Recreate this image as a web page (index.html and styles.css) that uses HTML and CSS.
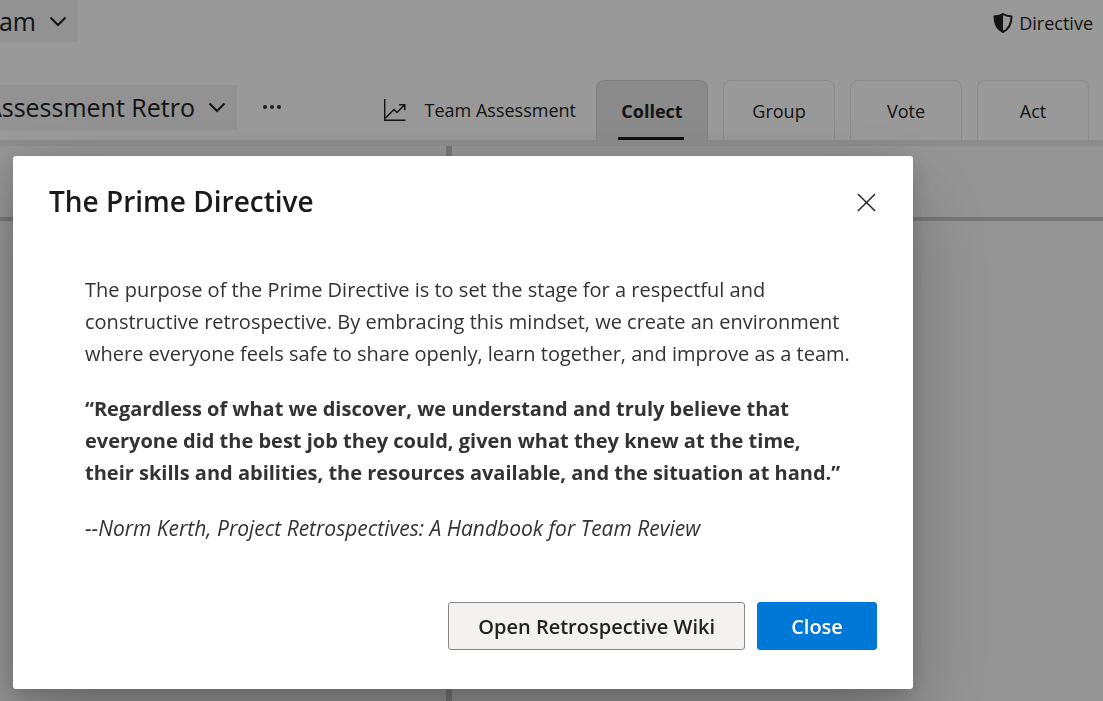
FILE: index.html
```
<!DOCTYPE html>
<html lang="en">
<head>
<meta charset="utf-8">
<meta name="viewport" content="width=device-width, initial-scale=1">
<title>Retrospectives</title>
<link rel="stylesheet" href="styles.css">
</head>
<body>
<div class="app">
  <header class="topbar">
    <button class="selector team-selector" type="button">
      <span>am</span>
      <svg class="chevron" viewBox="0 0 18 12" aria-hidden="true"><path d="M1.500 2.500 9 10 16.500 2.500"/></svg>
    </button>
    <button class="directive-button" type="button">
      <svg class="shield" viewBox="0 0 20 22" aria-hidden="true">
        <path class="shield-outline" d="M10 2C7.500 3.700 4.600 4.200 1.500 4.500c0 8 2.500 12.500 8.500 15.500 6-3 8.500-7.500 8.500-15.500C15.400 4.200 12.500 3.700 10 2z"/>
        <path class="shield-half" d="M10 2C7.500 3.700 4.600 4.200 1.500 4.500c0 8 2.500 12.500 8.500 15.500z"/>
      </svg>
      <span>Directive</span>
    </button>
  </header>
  <div class="board-bar">
    <button class="selector board-selector" type="button">
      <span>Assessment Retro</span>
      <svg class="chevron" viewBox="0 0 18 12" aria-hidden="true"><path d="M1.500 2.500 9 10 16.500 2.500"/></svg>
    </button>
    <button class="more-button" type="button" aria-label="More actions">
      <svg class="dots" viewBox="0 0 18 4" aria-hidden="true"><circle cx="2" cy="2" r="2"/><circle cx="9" cy="2" r="2"/><circle cx="16" cy="2" r="2"/></svg>
    </button>
    <button class="assessment-button" type="button">
      <svg class="chart" viewBox="0 0 22 22" aria-hidden="true"><path d="M.7 0v21.200H21.500M1.500 19 10 10.500l3 3L20.500 6M15 5.700h5.800v5.600"/></svg>
      <span>Team Assessment</span>
    </button>
    <nav class="tabs">
      <button class="tab tab-active" type="button">Collect</button>
      <button class="tab" type="button">Group</button>
      <button class="tab" type="button">Vote</button>
      <button class="tab" type="button">Act</button>
    </nav>
  </div>
  <main class="board">
    <section class="column"><div class="column-head"></div></section>
    <section class="column column-wide"><div class="column-head"></div></section>
  </main>
</div>

<div class="overlay">
  <div class="dialog" role="dialog" aria-modal="true" aria-labelledby="dialog-title">
    <div class="dialog-head">
      <h1 class="dialog-title" id="dialog-title">The Prime Directive</h1>
      <button class="dismiss" type="button" aria-label="Dismiss">
        <svg class="cross" viewBox="0 0 20 20" aria-hidden="true"><path d="M1 1 19 19M19 1 1 19"/></svg>
      </button>
    </div>
    <div class="dialog-body">
      <p class="text">The purpose of the Prime Directive is to set the stage for a respectful and<br>constructive retrospective. By embracing this mindset, we create an environment<br>where everyone feels safe to share openly, learn together, and improve as a team.</p>
      <p class="text"><strong>“Regardless of what we discover, we understand and truly believe that<br>everyone did the best job they could, given what they knew at the time,<br>their skills and abilities, the resources available, and the situation at hand.”</strong></p>
      <p class="text citation"><em>--Norm Kerth, Project Retrospectives: A Handbook for Team Review</em></p>
    </div>
    <div class="dialog-actions">
      <button class="button" type="button">Open Retrospective Wiki</button>
      <button class="button button-primary" type="button">Close</button>
    </div>
  </div>
</div>
</body>
</html>
```
FILE: styles.css
```
* { box-sizing: border-box; }
body {
  margin: 0;
  background: #fff;
  color: #222;
  font-family: "Segoe UI", "Open Sans", "Noto Sans", sans-serif;
  overflow: hidden;
}
button {
  font: inherit;
  color: inherit;
  background: none;
  border: 0;
  padding: 0;
  white-space: nowrap;
}
svg { flex: none; fill: none; stroke: #222; }
.app { display: flex; flex-direction: column; min-height: 100vh; }
.topbar {
  display: flex;
  justify-content: space-between;
  align-items: flex-start;
  padding-right: 10px;
  margin-bottom: 34px;
}
.selector {
  display: flex;
  align-items: center;
  justify-content: flex-end;
  gap: 13px;
  padding: 0 11px 1px 0;
  background: #f3f3f3;
  font-size: 25px;
  overflow: hidden;
}
.team-selector { width: 78px; height: 42px; }
.board-selector { width: 237px; height: 45px; margin-top: 5px; }
.chevron { width: 18px; height: 12px; stroke-width: 2; }
.directive-button {
  display: flex;
  align-items: center;
  gap: 6px;
  height: 46px;
  font-size: 18px;
}
.shield { width: 20px; height: 22px; stroke: none; }
.shield-outline { stroke: #222; stroke-width: 2; }
.shield-half { fill: #222; }
.board-bar {
  display: flex;
  height: 66px;
  padding-right: 14px;
  border-bottom: 6px solid #e8e8e8;
}
.more-button { height: 54px; margin-left: 26px; }
.dots { display: block; width: 18px; height: 4px; fill: #333; stroke: none; }
.assessment-button {
  display: flex;
  align-items: center;
  gap: 19px;
  height: 60px;
  margin-left: auto;
  margin-right: 20px;
  font-size: 18px;
}
.chart { width: 22px; height: 22px; stroke-width: 1.5; }
.tabs { display: flex; gap: 15px; }
.tab {
  display: flex;
  align-items: center;
  justify-content: center;
  position: relative;
  width: 112px;
  border: 1px solid #eaeaea;
  border-bottom: 0;
  border-radius: 8px 8px 0 0;
  font-size: 18px;
}
.tab-active { background: #e8e8e8; border-color: #d6d6d6; font-weight: 700; }
.tab-active::after {
  content: "";
  position: absolute;
  left: 21px;
  right: 23px;
  bottom: 0;
  height: 3px;
  background: #1a1a1a;
}
.board { display: flex; flex: 1; background: #f7f7f7; }
.column { flex: 0 0 452px; border-right: 6px solid #c6c6c6; }
.column-wide { flex: 1; border-right: 0; }
.column-head { height: 75px; border-bottom: 4px solid #c6c6c6; }

.overlay {
  position: fixed;
  inset: 0;
  display: flex;
  align-items: flex-start;
  padding: 156px 190px 12px 13px;
  background: rgba(0, 0, 0, .4);
}
.dialog {
  flex: 1;
  min-width: 0;
  padding: 24px 36px 39px;
  background: #fff;
  border-radius: 3px;
  box-shadow: 0 38px 86px rgba(0, 0, 0, .22), 0 7px 22px rgba(0, 0, 0, .18);
}
.dialog-head { display: flex; justify-content: space-between; align-items: center; height: 44px; }
.dialog-title { margin: 0; padding-bottom: 2px; font-size: 28px; line-height: 42px; font-weight: 600; color: #1a1a1a; }
.dismiss { padding: 1px; }
.cross { display: block; width: 19px; height: 19px; stroke-width: 1.5; }
.dialog-body { padding: 50px 24px 0 36px; }
.text {
  margin: 0 0 23px;
  font-size: 20px;
  line-height: 32px;
  color: #333;
}
.text:last-child { margin-bottom: 0; }
.citation { font-size: 21px; }
.dialog-actions { display: flex; justify-content: flex-end; gap: 12px; margin-top: 58px; }
.button {
  height: 48px;
  min-width: 120px;
  padding: 0 29px;
  border: 1px solid #8a8886;
  border-radius: 3px;
  background: #f3f2f1;
  font-size: 20px;
  font-weight: 600;
  color: #222;
}
.button-primary { background: #0078d7; border-color: #0078d7; color: #fff; }
```
